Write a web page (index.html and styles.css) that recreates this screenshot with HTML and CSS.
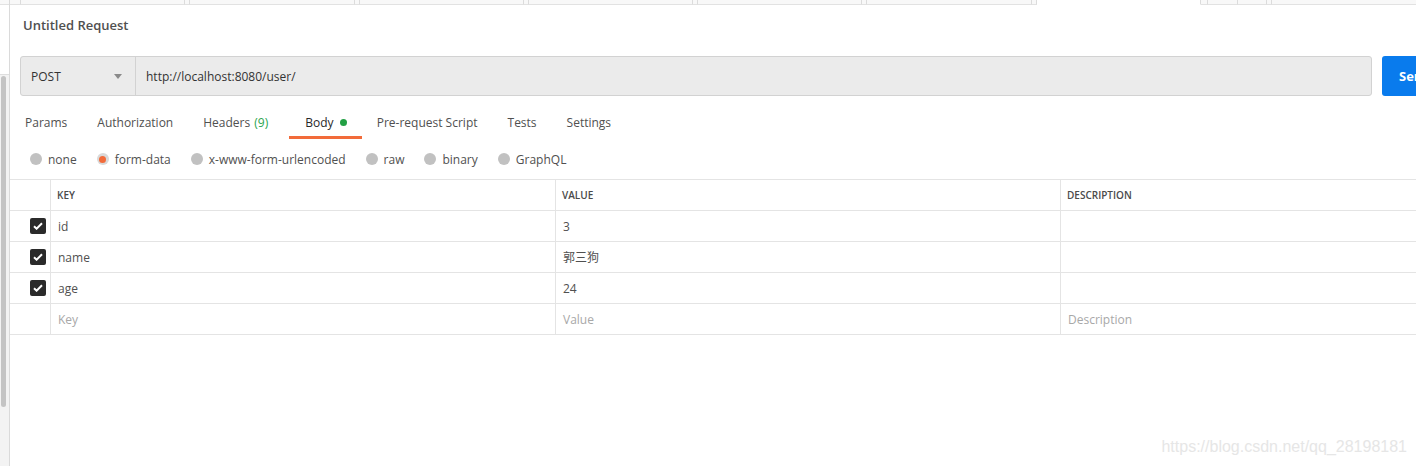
FILE: index.html
```html
<!DOCTYPE html>
<html lang="en">
<head>
<meta charset="utf-8">
<title>Untitled Request</title>
<link rel="stylesheet" href="styles.css">
</head>
<body>
<div class="app">
  <aside class="side">
    <div class="side-top"></div>
    <div class="side-track"><div class="thumb"></div></div>
  </aside>
  <main class="main">
    <div class="tabstrip">
      <div class="ts w11"></div>
      <div class="ts w164"></div><div class="ts w5"></div>
      <div class="ts w165"></div><div class="ts w5"></div>
      <div class="ts w164"></div><div class="ts w5"></div>
      <div class="ts w164"></div><div class="ts w5"></div>
      <div class="ts w164"></div><div class="ts w5"></div>
      <div class="ts w165"></div><div class="ts w5"></div>
      <div class="ts w164 active"></div>
      <div class="ts w7"></div>
      <div class="ts w30"></div>
      <div class="ts w29"></div>
      <div class="ts w5"></div>
      <div class="ts rest"></div>
    </div>

    <div class="title">Untitled Request</div>

    <div class="urlrow">
      <div class="urlgroup">
        <div class="method">
          <span>POST</span>
          <svg class="caret" width="8" height="5" viewBox="0 0 8 5"><path d="M0 0h8L4 5z" fill="#8a8a8a"/></svg>
        </div>
        <div class="url">http://localhost:8080/user/</div>
      </div>
      <button class="send">Send</button>
    </div>

    <nav class="tabs">
      <span class="tab">Params</span>
      <span class="tab">Authorization</span>
      <span class="tab">Headers <span class="count">(9)</span></span>
      <span class="tab active">Body <span class="dot"></span></span>
      <span class="tab">Pre-request Script</span>
      <span class="tab">Tests</span>
      <span class="tab">Settings</span>
    </nav>

    <div class="radios">
      <label class="radio"><span class="circle"></span>none</label>
      <label class="radio"><span class="circle on"></span>form-data</label>
      <label class="radio"><span class="circle"></span>x-www-form-urlencoded</label>
      <label class="radio"><span class="circle"></span>raw</label>
      <label class="radio"><span class="circle"></span>binary</label>
      <label class="radio"><span class="circle"></span>GraphQL</label>
    </div>

    <div class="kv">
      <div class="row head">
        <div class="cell"></div>
        <div class="cell">KEY</div>
        <div class="cell">VALUE</div>
        <div class="cell">DESCRIPTION</div>
      </div>
      <div class="row">
        <div class="cell chk"><span class="box"><svg width="10" height="8" viewBox="0 0 10 8"><path d="M1 4.2l2.6 2.5L9 1.3" fill="none" stroke="#fff" stroke-width="2"/></svg></span></div>
        <div class="cell">id</div>
        <div class="cell">3</div>
        <div class="cell"></div>
      </div>
      <div class="row">
        <div class="cell chk"><span class="box"><svg width="10" height="8" viewBox="0 0 10 8"><path d="M1 4.2l2.6 2.5L9 1.3" fill="none" stroke="#fff" stroke-width="2"/></svg></span></div>
        <div class="cell">name</div>
        <div class="cell">郭三狗</div>
        <div class="cell"></div>
      </div>
      <div class="row">
        <div class="cell chk"><span class="box"><svg width="10" height="8" viewBox="0 0 10 8"><path d="M1 4.2l2.6 2.5L9 1.3" fill="none" stroke="#fff" stroke-width="2"/></svg></span></div>
        <div class="cell">age</div>
        <div class="cell">24</div>
        <div class="cell"></div>
      </div>
      <div class="row">
        <div class="cell"></div>
        <div class="cell ph">Key</div>
        <div class="cell ph">Value</div>
        <div class="cell ph">Description</div>
      </div>
    </div>

    <div class="watermark">https://blog.csdn.net/qq_28198181</div>
  </main>
</div>
</body>
</html>
```

FILE: styles.css
```css
* { box-sizing: border-box; }
html, body {
  margin: 0;
  padding: 0;
  width: 1416px;
  height: 466px;
  overflow: hidden;
  background: #fff;
  font-family: "Open Sans", "Noto Sans CJK SC", sans-serif;
  color: #505050;
}
.app {
  display: flex;
  height: 466px;
}
.side {
  width: 10px;
  flex: none;
  border-right: 1px solid #dadada;
  display: flex;
  flex-direction: column;
  background: #fff;
}
.side-top {
  height: 75px;
  border-bottom: 1px solid #dedede;
  background: linear-gradient(#f8f8f8 0 4px, #e2e2e2 4px 5px, #fff 5px);
}
.side-track {
  flex: 1;
  background: #f3f3f3;
  padding: 1px 0 0 1px;
}
.thumb {
  width: 5px;
  height: 331px;
  border-radius: 3px;
  background: #c4c4c4;
}
.main {
  flex: 1;
  min-width: 0;
  position: relative;
  overflow: hidden;
  display: flex;
  flex-direction: column;
}
.tabstrip {
  display: flex;
  height: 5px;
  flex: none;
}
.ts {
  height: 5px;
  background: #f8f8f8;
  border-right: 1px solid #dcdcdc;
  border-bottom: 1px solid #e2e2e2;
  flex: none;
}
.ts.active { background: #fff; border-bottom-color: #fff; }
.ts.rest { flex: 1; border-right: none; }
.w5 { width: 5px; }
.w7 { width: 7px; }
.w11 { width: 11px; }
.w29 { width: 29px; }
.w30 { width: 30px; }
.w164 { width: 164px; }
.w165 { width: 165px; }

.title {
  height: 40px;
  line-height: 40px;
  padding-left: 13px;
  font-size: 13px;
  font-weight: 600;
  color: #505050;
  flex: none;
}
.urlrow {
  margin-top: 11px;
  margin-left: 10px;
  display: flex;
  gap: 10px;
  height: 40px;
  flex: none;
}
.urlgroup {
  width: 1352px;
  flex: none;
  display: flex;
  background: #ebebeb;
  border: 1px solid #d2d2d2;
  border-radius: 3px;
}
.method {
  width: 115px;
  flex: none;
  border-right: 1px solid #d2d2d2;
  display: flex;
  align-items: center;
  justify-content: space-between;
  padding: 0 13px 0 10px;
  font-size: 12px;
  color: #333;
}
.url {
  display: flex;
  align-items: center;
  padding-left: 10px;
  font-size: 12px;
  color: #333;
}
.send {
  width: 100px;
  flex: none;
  height: 40px;
  border: none;
  border-radius: 3px;
  background: #097bed;
  color: #fff;
  font-family: "Open Sans", sans-serif;
  font-size: 13px;
  font-weight: 700;
  text-align: left;
  padding-left: 17px;
}
.tabs {
  margin-top: 10px;
  display: flex;
  height: 33px;
  flex: none;
}
.tab {
  padding: 9px 15px 5px;
  line-height: 16px;
  font-size: 12px;
  color: #505050;
  border-bottom: 3px solid transparent;
  white-space: nowrap;
}
.tab.active {
  color: #282828;
  border-bottom-color: #f26b3a;
  margin-left: 6px;
  padding-left: 16px;
}
.count { color: #2ba44f; margin-left: 1px; }
.dot {
  display: inline-block;
  width: 7px;
  height: 7px;
  border-radius: 50%;
  background: #22a044;
  margin-left: 3px;
  vertical-align: 1px;
}
.radios {
  height: 40px;
  display: flex;
  align-items: center;
  padding-left: 20px;
  flex: none;
  gap: 20px;
}
.radio {
  display: flex;
  align-items: center;
  font-size: 12px;
  color: #505050;
}
.circle {
  width: 12px;
  height: 12px;
  border-radius: 50%;
  background: #c1c1c1;
  margin-right: 6px;
  display: flex;
  align-items: center;
  justify-content: center;
}
.circle.on {
  background: #d9d9d9;
}
.circle.on::after {
  content: "";
  width: 7px;
  height: 7px;
  border-radius: 50%;
  background: #f26b3a;
}
.kv {
  border-top: 1px solid #e4e4e4;
  flex: none;
}
.row {
  display: grid;
  grid-template-columns: 41px 505px 505px 1fr;
  height: 31px;
  border-bottom: 1px solid #e4e4e4;
}
.cell {
  border-right: 1px solid #e4e4e4;
  display: flex;
  align-items: center;
  padding-left: 7px;
  font-size: 12px;
  color: #505050;
  white-space: nowrap;
}
.cell:last-child { border-right: none; }
.head .cell {
  font-size: 10px;
  font-weight: 600;
  color: #4a4a4a;
  padding-left: 6px;
}
.cell.chk { padding-left: 20px; }
.box {
  width: 16px;
  height: 16px;
  border-radius: 2px;
  background: #2a2a2a;
  display: flex;
  align-items: center;
  justify-content: center;
}
.ph { color: #a8a8a8; }
.watermark {
  position: absolute;
  right: 9px;
  bottom: 10px;
  font-family: "Liberation Sans", Arial, sans-serif;
  font-size: 16px;
  color: #e6e6e6;
}
```
